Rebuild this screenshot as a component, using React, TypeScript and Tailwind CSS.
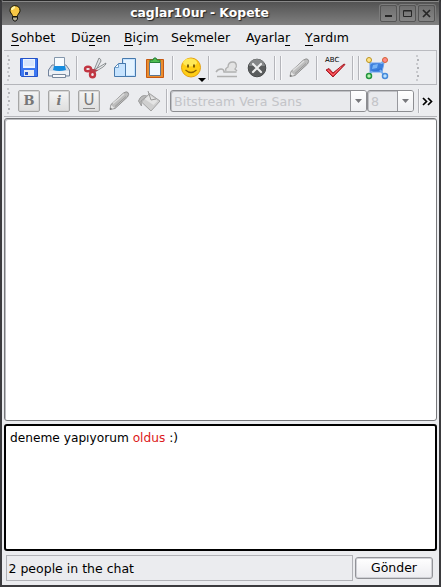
import type { ReactNode } from "react";

function Icon({ children }: { children: ReactNode }) {
  return (
    <div className="flex w-[30px] shrink-0 justify-center">
      <svg width="24" height="24" viewBox="0 0 24 24" fill="none">
        {children}
      </svg>
    </div>
  );
}

function Sep() {
  return (
    <div className="flex h-6 w-1.5 shrink-0 pl-0.5">
      <div className="w-px bg-[#b4b5ba]" />
      <div className="w-px bg-[#f8f8fa]" />
    </div>
  );
}

function Grip() {
  return (
    <div className="flex h-[26px] w-[3px] shrink-0 flex-col justify-between">
      {[0, 1, 2, 3, 4, 5, 6].map((n) => (
        <div key={n} className={n % 2 ? "ml-px size-0.5 bg-[#b3b4b8]" : "size-0.5 bg-[#cacbcf]"} />
      ))}
    </div>
  );
}

function FormatButton({ label, look }: { label: string; look: string }) {
  return (
    <div className="flex w-[30px] shrink-0 justify-center">
      <div className="flex h-[22px] w-[22px] items-center justify-center rounded-[2px] border border-[#a6a6a6] bg-linear-to-b from-[#f5f5f5] to-[#dedede] text-[#777] shadow-[inset_0_0_0_1px_#d6d6d6]">
        <span className={look}>{label}</span>
      </div>
    </div>
  );
}

function Combo({ text, size }: { text: string; size: string }) {
  return (
    <div className={`flex h-[22px] shrink-0 rounded-[3px] border border-[#8c8d91] bg-[#e9eaed] shadow-[inset_1px_1px_0_#c0c1c5] ${size}`}>
      <div className="flex-1 pl-[3px] text-[12.6px] leading-[21px] whitespace-nowrap text-[#c3c4c8]">{text}</div>
      <div className="flex w-4 items-center justify-center rounded-r-[2px] border-l border-[#97989d] bg-linear-to-b from-white to-[#eeeff2]">
        <svg width="7" height="4" viewBox="0 0 7 4">
          <path d="M0 0h7L3.5 4Z" fill="#77787c" />
        </svg>
      </div>
    </div>
  );
}

function Pencil() {
  return (
    <Icon>
      <path d="m3 20.500 1-5L16.500 4q3-2 4.500-.5t-.5 4.500L8 19.500Z" fill="#bdbdbd" stroke="#929292" />
      <path d="M6 14.500 17 5" stroke="#dedede" strokeWidth="1.500" />
      <path d="M8 17.500 19 7.500" stroke="#999" />
      <path d="m3.500 20 .5-4 3.500 3Z" fill="#e6e6e6" />
      <path d="m3 20.500.5-2 1.500 1.500Z" fill="#666" />
    </Icon>
  );
}

function WindowButton({ children }: { children: ReactNode }) {
  return (
    <div className="flex h-[17px] w-[17px] items-center justify-center rounded-[2px] border border-[#555] bg-linear-to-b from-[#6f6f6f] to-[#858585] shadow-[0_0_0_1px_#7c7c7c]">
      <svg className="shrink-0" width="11" height="11" viewBox="0 0 11 11" fill="none" stroke="#262626">
        {children}
      </svg>
    </div>
  );
}

const menus = [
  { pre: "", key: "S", post: "ohbet", width: "w-[60px]" },
  { pre: "Dü", key: "z", post: "en", width: "w-[53px]" },
  { pre: "", key: "B", post: "içim", width: "w-[47px]" },
  { pre: "Se", key: "k", post: "meler", width: "w-[75px]" },
  { pre: "Ayarla", key: "r", post: "", width: "w-[59px]" },
  { pre: "", key: "Y", post: "ardım", width: "w-[60px]" },
];

export default function App() {
  return (
    <div className="h-[587px] w-[441px] bg-[#303030]">
      <div className="flex h-full flex-col overflow-hidden rounded-t-[3px] border-x-2 border-b-2 border-[#3b3b3e] bg-[#ebecef] font-['DejaVu_Sans',sans-serif] text-[12.5px] text-black">
        <header className="flex h-[25px] shrink-0 items-center border-t border-[#292929] bg-linear-to-b from-[#515151] to-[#808080] pt-px shadow-[inset_0_1px_0_#888]">
          <svg className="ml-[7px] shrink-0" width="12" height="17" viewBox="0 0 12 17">
            <path d="M6 .7C2.8.7 1 2.7 1 5.5c0 2 1.5 3 2.5 5v1h5v-1c1-2 2.5-3 2.5-5C11 2.7 9.200.7 6 .7Z" fill="#f7c744" stroke="#171500" />
            <path d="M3 5q0-2 3-3" stroke="#fff5a5" strokeWidth="2" fill="none" />
            <path d="M3.500 12h5v2L7 16H5l-1.500-2Z" fill="#b4b092" stroke="#171717" />
          </svg>
          <h1 className="flex-1 pr-[2px] text-center text-[12.4px] font-bold text-white [text-shadow:1px_1px_1px_#222]">caglar10ur - Kopete</h1>
          <div className="mr-1 flex gap-0.5">
            <WindowButton><path d="M2 8h7" strokeWidth="2" /></WindowButton>
            <WindowButton><path d="M1.500 2.500h8v6h-8ZM2 3h7" /></WindowButton>
            <WindowButton><path d="m2 2 7 7m0-7L2 9" strokeWidth="1.700" /></WindowButton>
          </div>
        </header>

        <nav className="flex h-[25px] shrink-0 items-center pt-px pl-[9px] leading-[18px]">
          {menus.map((m) => (
            <div key={m.key} className={`flex shrink-0 whitespace-nowrap ${m.width}`}>
              <span>{m.pre}</span>
              <span className="h-[17px] border-b border-black">{m.key}</span>
              <span>{m.post}</span>
            </div>
          ))}
        </nav>

        <div className="mx-0.5 flex h-[34px] shrink-0 items-center border-t border-r border-[#babbc0] pl-[3px]">
          <Grip />
          <div className="w-1 shrink-0" />
          <Icon>
            <path d="M3.500 2.500h17v18h-16l-1-1Z" fill="#3d78f2" stroke="#2452c8" />
            <path d="M6 3h12v9H6Z" fill="#edf4ff" />
            <path d="M7 5h10M7 7h10M7 9h10" stroke="#c4d7f7" />
            <path d="M7 14h10v6H7Z" fill="#e5eaf2" /><path d="M8 16h3v3H8Z" fill="#2854c8" />
          </Icon>
          <Icon>
            <path d="m5 9-3.500 5v6h21v-6L19 9Z" fill="#d2dbe7" stroke="#73839c" />
            <path d="M7.500 12V1.500h10V12" fill="#f7fbff" stroke="#8497ac" />
            <path d="M7 10h11l1 4q-7 2-13 0Z" fill="#168cdf" />
            <path d="M2 15h20v4H2Z" fill="#edf0f5" /><path d="M5.500 18.500h13v3h-13Z" fill="#f9f9fb" stroke="#78879c" />
          </Icon>
          <Sep />
          <Icon>
            <path d="m11 14 5-12q2 1 2 3l-5 9Z" fill="#dfe2e5" stroke="#74787b" strokeWidth=".8" />
            <path d="m11 14 12-7q0 2-3 4l-8 5Z" fill="#e9ebed" stroke="#74787b" strokeWidth=".8" />
            <ellipse cx="5" cy="13" rx="3" ry="2.300" stroke="#c23642" strokeWidth="2.400" />
            <ellipse cx="9.500" cy="18.500" rx="2.500" ry="2.800" stroke="#c23642" strokeWidth="2.400" />
            <path d="m7.500 13.500 5 1-2.500 1.500" stroke="#b93b48" strokeWidth="2" />
          </Icon>
          <Icon>
            <path d="M9.500 2.500h13v18h-13Z" fill="#c6e3ff" stroke="#4679ad" />
            <path d="M11 4h10v15H11Z" fill="#e4f3ff" />
            <path d="M5.500 7.500h7v13h-11v-9Z" fill="#c6e3fe" stroke="#4679ad" />
            <path d="M2 11.500h3.500V8" fill="#fff" stroke="#6e9fcc" />
            <path d="M12.500 7.500v13" stroke="#4679ad" />
          </Icon>
          <Icon>
            <path d="M3.500 3.500h17v18h-17Z" fill="#e98d2e" stroke="#c65811" />
            <path d="M6.500 6.500h11v13h-11Z" fill="#eff7ff" stroke="#5c7592" />
            <path d="M7 6.500V4h3l1-2h2l1 2h3v2.500Z" fill="#4ebd53" stroke="#23813a" />
          </Icon>
          <Sep />
          <div className="relative shrink-0">
            <Icon>
              <circle cx="12" cy="11.500" r="9.500" fill="#ffce16" stroke="#e3a012" />
              <ellipse cx="11" cy="6.500" rx="7" ry="4" fill="#ffe957" />
              <path d="M6.500 14q5.500 5 11 0" stroke="#8b6200" strokeWidth="1.200" />
              <path d="M9 8.500v3m6-3v3" stroke="#684b00" strokeWidth="1.700" />
            </Icon>
            <svg className="absolute right-0 -bottom-[2px]" width="8" height="4" viewBox="0 0 8 4"><path d="M0 0h8L4 4Z" fill="#000" /></svg>
          </div>
          <Sep />
          <Icon>
            <path d="M2 20.500h20M1 16q2-3 5-3 3 0 3 3h12.500" stroke="#b0b0b0" strokeWidth="1.400" />
            <path d="M11 15c-1-2 0-3 2-4 0-3 2-5 5-5 3.500 0 4.500 5 2 7l2 2" fill="#e3e3e3" stroke="#b0b0b0" strokeWidth="1.300" />
          </Icon>
          <Icon>
            <circle cx="12" cy="12" r="8.800" fill="#5a5c5d" stroke="#484a4b" />
            <path d="M4 10q1-7 8-7t8 7Z" fill="#858788" />
            <path d="m8 8 8 8m0-8-8 8" stroke="#eee" strokeWidth="2.200" strokeLinecap="round" />
          </Icon>
          <Sep /><Sep />
          <Pencil />
          <Sep />
          <div className="relative shrink-0">
            <Icon>
              <path d="m3 14 3-1.500 4 4.500L21 8l1 .5L10 21Z" fill="#e33840" stroke="#a61d26" strokeWidth="1" strokeLinejoin="round" />
              <path d="m5 14 5 5 8-8" stroke="#ff7478" strokeWidth=".8" />
            </Icon>
            <span className="absolute top-[1px] left-[5px] text-[7px] leading-[7px]">ABC</span>
          </div>
          <Sep /><Sep />
          <Icon>
            <path d="M5 7h14l-2 9H5Z" fill="#3475d6" stroke="#6ba1ee" />
            <path d="m4 5 3 4m12-5-3 4M4 19l3-4m12 4-4-5" stroke="#78afef" strokeWidth="2" />
            <path d="M6 8h12l-1 4-11 3Z" fill="#3d80de" />
            <path d="m8 9 5-1-1 4-5 1Z" fill="#79b4f5" />
            <circle cx="4" cy="4" r="2.500" fill="#ffe38a" stroke="#ba941f" />
            <circle cx="20" cy="4" r="2.500" fill="#f88" stroke="#d46232" />
            <circle cx="4" cy="20" r="2.500" fill="#b9f4ae" stroke="#23943d" strokeWidth="1.500" />
            <circle cx="20" cy="20" r="2.500" fill="#bce2ff" stroke="#458ada" strokeWidth="1.500" />
          </Icon>
          <div className="w-6 shrink-0" />
          <Grip />
        </div>

        <div className="mx-0.5 flex h-[33px] shrink-0 items-center border-y border-[#b4b5ba] pl-[3px]">
          <Grip />
          <div className="w-1 shrink-0" />
          <FormatButton label="B" look="font-['DejaVu_Serif',serif] text-[13px] leading-none font-bold" />
          <FormatButton label="i" look="font-['DejaVu_Serif',serif] text-[13px] leading-none font-bold italic" />
          <FormatButton label="U" look="h-4 border-b border-[#888] px-px text-[15px] leading-[14px]" />
          <Pencil />
          <Icon>
            <path d="M12.500 4.500 23 12l-9 10-9.500-9Z" fill="#cfcfcf" stroke="#a3a3a3" />
            <path d="m12.500 6 8 6-4 4-9-6Z" fill="#e4e4e4" />
            <path d="M10 7Q4 5 1.500 12l3 5-.5-5 5-4" fill="#bbb" stroke="#9b9b9b" />
            <path d="m11 2 3 9 5-1" stroke="#999" />
          </Icon>
          <Sep />
          <Combo text="Bitstream Vera Sans" size="w-[197px]" />
          <Combo text="8" size="w-[47px]" />
          <div className="ml-0.5"><Sep /></div>
          <svg className="mt-0.5 shrink-0" width="11" height="9" viewBox="0 0 11 9" fill="none"><path d="m1 1 3.500 3.500L1 8m5-7 3.500 3.500L6 8" stroke="#000" strokeWidth="1.700" /></svg>
        </div>

        <main className="mx-0.5 mt-px h-[303px] shrink-0 rounded-[3px] border border-[#77787b] bg-white shadow-[inset_1px_1px_0_#bbbcc0]" />
        <div className="mx-0.5 mt-[3px] h-[127px] shrink-0 rounded-[3px] border-2 border-black bg-white px-[4px] pt-[4px] text-[12.2px] leading-[17px]">
          deneme yapıyorum <span className="text-[#dc1820]">oldus</span> :)
        </div>
        <footer className="flex flex-1 items-center pr-[4px] pl-[4px]">
          <div className="h-[26px] w-[347px] border border-[#b1b2b7] pl-[1.5px] leading-[26px]">2 people in the chat</div>
          <button className="ml-[2px] h-[22px] w-[78px] rounded-[3px] border border-[#929398] bg-linear-to-b from-white to-[#ececf0] text-center leading-[18px] shadow-[inset_0_0_0_1px_#d0d1d6]">Gönder</button>
        </footer>
      </div>
    </div>
  );
}
